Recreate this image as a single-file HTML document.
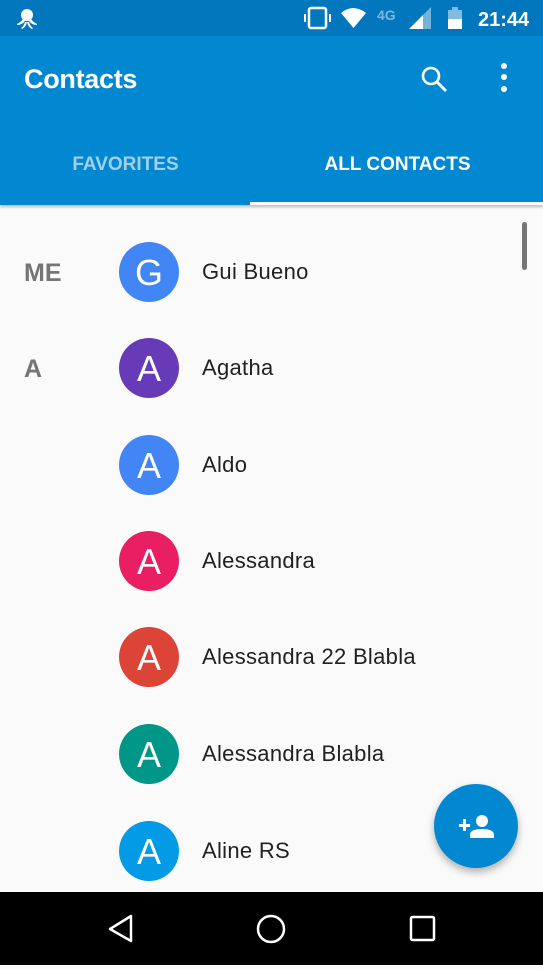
<!DOCTYPE html>
<html><head><meta charset="utf-8"><style>
*{margin:0;padding:0;box-sizing:border-box}
body{width:543px;height:965px;overflow:hidden;background:#fafafa;font-family:"Liberation Sans",Roboto,sans-serif;position:relative}
.sb{position:absolute;top:0;left:0;width:543px;height:36px;background:#0277bd}
.ab{position:absolute;top:36px;left:0;width:543px;height:169px;background:#0288d1;box-shadow:0 2px 3px rgba(0,0,0,.25)}
.title{position:absolute;left:24px;top:28px;color:#fff;font-size:27px;font-weight:bold;letter-spacing:-0.3px}
.tab{position:absolute;top:118px;font-size:19px;font-weight:bold;color:#fff;width:271px;text-align:center}
.ul{position:absolute;left:250px;top:166px;width:293px;height:3px;background:#fff}
.row{position:absolute;left:0;width:543px;height:60px}
.av{position:absolute;left:119px;top:0;width:60px;height:60px;border-radius:50%;color:#fff;font-size:36px;text-align:center;line-height:61px}
.nm{position:absolute;left:202px;top:17px;font-size:22px;color:#212121;letter-spacing:0.3px}
.hd{position:absolute;left:24px;top:17px;font-size:25px;color:#757575;font-weight:bold}
.nav{position:absolute;top:892px;left:0;width:543px;height:73px;background:#000}
.fab{position:absolute;left:434px;top:784px;width:84px;height:84px;border-radius:50%;background:#0288d1;box-shadow:0 4px 8px rgba(0,0,0,.3)}
</style></head><body>
<div class="sb">
<svg width="543" height="36" style="position:absolute;left:0;top:0">
<g fill="#fff">
<circle cx="27" cy="15" r="6"/><path d="M17 24 q4 -2 6 -5 l2 2 q-3 4 -8 4z M37 24 q-4 -2 -6 -5 l-2 2 q3 4 8 4z M21 28 q3 -2 4 -6 h2 q-1 5 -5 7z M33 28 q-3 -2 -4 -6 h-2 q1 5 5 7z"/>
<rect x="304" y="14" width="2" height="8"/><rect x="329" y="14" width="2" height="8"/>
<rect x="309" y="8" width="17" height="20" rx="2" fill="none" stroke="#fff" stroke-width="2.5"/>
<path d="M341 13 q12 -10 25 0 l-12.5 15z"/>
<text x="377" y="20" font-size="14" font-weight="bold" fill="#7fb6da" font-family="Liberation Sans">4G</text>
<path d="M409 29 l14 -14 v14z"/><path d="M423 15 l8 -8 v22 h-8z" opacity=".45"/>
<rect x="448" y="10" width="14" height="19" opacity=".5"/><rect x="452" y="7" width="6" height="3" opacity=".5"/><rect x="448" y="19" width="14" height="10"/>
<text x="478" y="26" font-size="20" font-weight="bold" font-family="Liberation Sans">21:44</text>
</g></svg></div>
<div class="ab">
<div class="title">Contacts</div>
<svg width="543" height="60" style="position:absolute;left:0;top:0">
<circle cx="431" cy="40" r="8" fill="none" stroke="#fff" stroke-width="2.6"/>
<path d="M437 46 l9 9" stroke="#fff" stroke-width="3"/>
<circle cx="504" cy="30" r="3" fill="#fff"/><circle cx="504" cy="41" r="3" fill="#fff"/><circle cx="504" cy="53" r="3" fill="#fff"/>
</svg>
<div class="tab" style="left:-10px;color:#9fd0ee">FAVORITES</div>
<div class="tab" style="left:262px">ALL CONTACTS</div>
<div class="ul"></div>
</div>
<div style="position:absolute;left:522px;top:222px;width:5px;height:48px;border-radius:3px;background:#757575"></div>
<div class="row" style="top:242px"><div class="hd">ME</div><div class="av" style="background:#4285f4">G</div><div class="nm">Gui Bueno</div></div>
<div class="row" style="top:338px"><div class="hd">A</div><div class="av" style="background:#673ab7">A</div><div class="nm">Agatha</div></div>
<div class="row" style="top:435px"><div class="av" style="background:#4285f4">A</div><div class="nm">Aldo</div></div>
<div class="row" style="top:531px"><div class="av" style="background:#e91e63">A</div><div class="nm">Alessandra</div></div>
<div class="row" style="top:627px"><div class="av" style="background:#db4437">A</div><div class="nm">Alessandra 22 Blabla</div></div>
<div class="row" style="top:724px"><div class="av" style="background:#009688">A</div><div class="nm">Alessandra Blabla</div></div>
<div class="row" style="top:821px"><div class="av" style="background:#039be5">A</div><div class="nm">Aline RS</div></div>
<div class="fab"><svg width="84" height="84">
<g fill="#fff"><rect x="25" y="40" width="11" height="3"/><rect x="29" y="35" width="3" height="12"/>
<circle cx="48" cy="37" r="6"/><path d="M36 54 v-3 q0 -6 12 -6 q12 0 12 6 v3z"/></g></svg></div>
<div class="nav"><svg width="543" height="73">
<g fill="none" stroke="#fff" stroke-width="2.5" stroke-linejoin="round">
<path d="M131 24 L110 37 L131 49z"/>
<circle cx="271" cy="37" r="13"/>
<rect x="411" y="25" width="23" height="23" rx="1.5"/>
</g></svg></div>
</body></html>
